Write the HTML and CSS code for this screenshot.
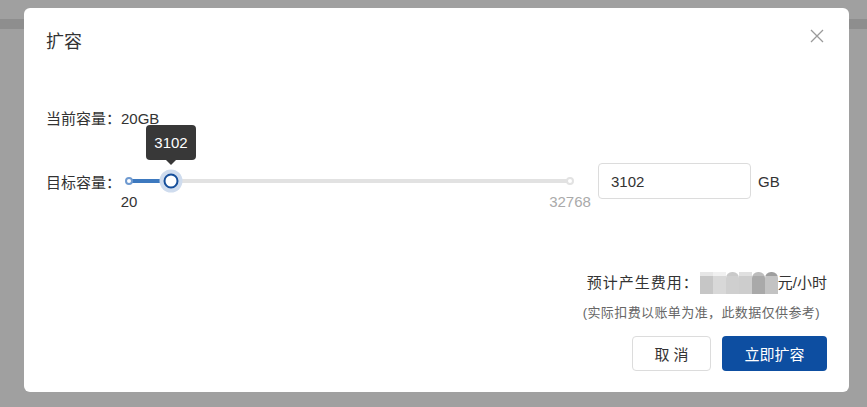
FILE: index.html
```html
<!DOCTYPE html>
<html lang="zh-CN">
<head>
    <meta charset="UTF-8">
    <meta name="viewport" content="width=device-width, initial-scale=1.0">
    <title>扩容</title>
    <link rel="stylesheet" href="styles.css">
</head>
<body>
    <div class="page-bar"></div>

    <div class="modal">
        <div class="modal-header">
            <h2 class="modal-title">扩容</h2>
            <button class="modal-close" aria-label="关闭">
                <svg width="14" height="14" viewBox="0 0 14 14">
                    <path d="M1 1 L13 13 M13 1 L1 13" stroke="#9a9a9a" stroke-width="1.3" fill="none"/>
                </svg>
            </button>
        </div>

        <div class="current-row">当前容量：20GB</div>

        <div class="target-row">
            <span class="target-label">目标容量：</span>
            <div class="slider">
                <div class="slider-track"></div>
                <div class="slider-fill"></div>
                <span class="slider-dot dot-start"></span>
                <span class="slider-dot dot-end"></span>
                <span class="slider-handle"></span>
                <div class="slider-tip">3102</div>
                <span class="slider-mark mark-start">20</span>
                <span class="slider-mark mark-end">32768</span>
            </div>
            <input class="size-input" type="text" value="3102">
            <span class="unit">GB</span>
        </div>

        <div class="fee-row">
            <span class="fee-label">预计产生费用：</span>
            <span class="fee-blur">
                <i class="b1"></i><i class="b2"></i><i class="b3"></i><i class="b4"></i><i class="b5"></i><i class="b6"></i>
            </span>
            <span>元/小时</span>
        </div>
        <div class="fee-note">(实际扣费以账单为准，此数据仅供参考)</div>

        <div class="modal-footer">
            <button class="btn btn-cancel">取 消</button>
            <button class="btn btn-primary">立即扩容</button>
        </div>
    </div>
</body>
</html>
```

FILE: styles.css
```css
body {
    margin: 0;
    background-color: #a0a0a0;
    font-family: 'Liberation Sans', 'Noto Sans CJK SC', sans-serif;
    color: #333;
}

.page-bar {
    height: 10px;
    margin-top: 19px;
    background-color: #8e8e8e;
}

.modal {
    position: absolute;
    left: 24px;
    top: 8px;
    width: 825px;
    height: 384px;
    box-sizing: border-box;
    padding: 0 22px;
    background-color: #fff;
    border-radius: 6px;
    display: flex;
    flex-direction: column;
}

.modal-header {
    display: flex;
    justify-content: space-between;
    padding-top: 22px;
}

.modal-title {
    margin: 0;
    font-size: 18px;
    font-weight: normal;
    line-height: 24px;
    color: #333;
}

.modal-close {
    margin: -1px 3px 0 0;
    padding: 0;
    width: 14px;
    height: 14px;
    border: none;
    background: none;
}

.current-row {
    margin-top: 55px;
    font-size: 15px;
    line-height: 20px;
}

.target-row {
    margin-top: 34px;
    height: 36px;
    display: flex;
    align-items: center;
    font-size: 15px;
}

.target-label {
    width: 79px;
}

.slider {
    position: relative;
    width: 449px;
    height: 36px;
}

.slider-track {
    position: absolute;
    left: 4px;
    right: 4px;
    top: 16px;
    height: 4px;
    border-radius: 2px;
    background-color: #e2e2e2;
}

.slider-fill {
    position: absolute;
    left: 4px;
    width: 42px;
    top: 16px;
    height: 4px;
    background-color: #3d79bf;
}

.slider-dot {
    position: absolute;
    top: 14px;
    width: 8px;
    height: 8px;
    box-sizing: border-box;
    border-radius: 50%;
    background-color: #fff;
    transform: translateX(-50%);
}

.dot-start {
    left: 4px;
    border: 2px solid #6f9ad0;
}

.dot-end {
    left: 445px;
    border: 2px solid #e2e2e2;
}

.slider-handle {
    position: absolute;
    left: 46px;
    top: 18px;
    width: 15px;
    height: 15px;
    box-sizing: border-box;
    border: 2.5px solid #164f9b;
    border-radius: 50%;
    background-color: #fff;
    box-shadow: 0 0 0 4px #cfdcee;
    transform: translate(-50%, -50%);
}

.slider-tip {
    position: absolute;
    left: 46px;
    top: -38px;
    width: 50px;
    height: 35px;
    line-height: 35px;
    text-align: center;
    color: #fff;
    font-size: 15px;
    background-color: #383838;
    border-radius: 4px;
    transform: translateX(-50%);
}

.slider-tip::after {
    content: '';
    position: absolute;
    left: 50%;
    bottom: -5px;
    margin-left: -5px;
    border-left: 5px solid transparent;
    border-right: 5px solid transparent;
    border-top: 5px solid #383838;
}

.slider-mark {
    position: absolute;
    top: 30px;
    font-size: 15px;
    line-height: 18px;
    transform: translateX(-50%);
}

.mark-start {
    left: 4px;
    color: #333;
}

.mark-end {
    left: 445px;
    color: #aaa;
}

.size-input {
    margin-left: 24px;
    width: 153px;
    height: 36px;
    box-sizing: border-box;
    padding: 0 12px;
    font-family: inherit;
    font-size: 15px;
    color: #333;
    border: 1px solid #dcdcdc;
    border-radius: 4px;
    outline: none;
}

.unit {
    margin-left: 7px;
}

.fee-row {
    margin-top: 72px;
    display: flex;
    justify-content: flex-end;
    align-items: center;
    font-size: 15px;
    line-height: 24px;
    color: #333;
}

.fee-label {
    letter-spacing: 1px;
}

.fee-blur {
    display: flex;
    height: 22px;
    margin-left: 1px;
}

.fee-blur i {
    width: 13px;
    height: 22px;
}

.fee-blur .b1 { background: linear-gradient(#e6e6e6 20%, #c6c6c6 20%); }
.fee-blur .b2 { background: linear-gradient(#f0f0f0 20%, #d8d8d8 20%); }
.fee-blur .b3 { background: linear-gradient(#c9c9c9 20%, #cfcfcf 20%); border-radius: 6px 6px 0 0; }
.fee-blur .b4 { background: linear-gradient(#e0e0e0 20%, #cdcdcd 20%); }
.fee-blur .b5 { background: linear-gradient(#bcbcbc 20%, #a9a9a9 20%); border-radius: 6px 6px 0 0; }
.fee-blur .b6 { background: linear-gradient(#9e9e9e 20%, #c3c3c3 20%); border-radius: 6px 6px 0 0; }

.fee-note {
    margin-top: 9px;
    padding-right: 7px;
    text-align: right;
    font-size: 13px;
    line-height: 18px;
    letter-spacing: 0.4px;
    color: #666;
}

.modal-footer {
    margin-top: 14px;
    display: flex;
    justify-content: flex-end;
    gap: 11px;
}

.btn {
    height: 35px;
    padding: 0;
    font-family: inherit;
    font-size: 15px;
    border-radius: 4px;
    cursor: pointer;
}

.btn-cancel {
    width: 79px;
    color: #333;
    background-color: #fff;
    border: 1px solid #dcdcdc;
}

.btn-primary {
    width: 105px;
    color: #fff;
    background-color: #0d4ea1;
    border: none;
}
```
